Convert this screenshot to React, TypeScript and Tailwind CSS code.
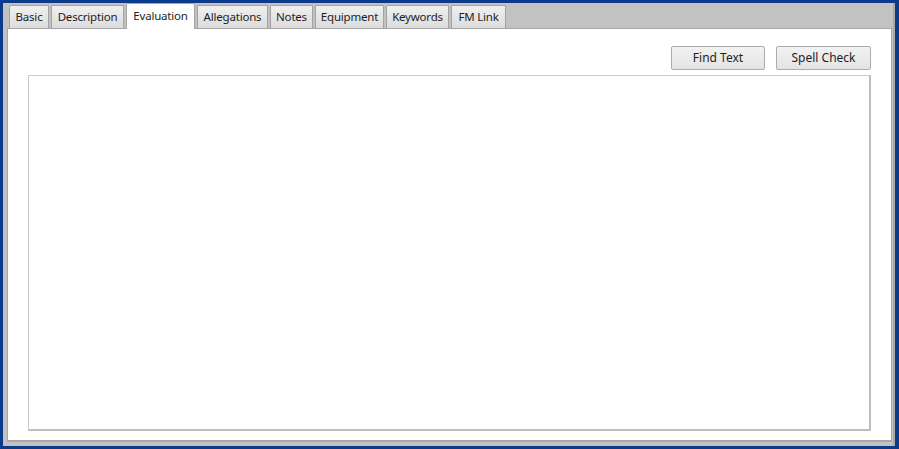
import React from 'react';

const tabs = [
    { label: 'Basic', w: 'w-[40px]' },
    { label: 'Description', w: 'w-[73px]' },
    { label: 'Evaluation', w: 'w-[69px]' },
    { label: 'Allegations', w: 'w-[71px]' },
    { label: 'Notes', w: 'w-[43px]' },
    { label: 'Equipment', w: 'w-[69px]' },
    { label: 'Keywords', w: 'w-[63px]' },
    { label: 'FM Link', w: 'w-[55px]' },
];
const active = 'Evaluation';

export default function App() {
    return (
        <div className="w-[899px] h-[449px] bg-[#0c3b8c] pt-[3px] pb-[3px] pl-[3px] pr-[4px] font-['Noto_Sans',sans-serif] text-[12px] text-[#1e1e1e]">
            <div className="h-full bg-[#c2c2c2] border-r-2 border-[#a9a9a9] flex flex-col pl-[4px] pr-[1px] pb-[4px]">
                <div className="flex items-end h-[25px] pl-[2px] gap-[2px]">
                    {tabs.map((t) => {
                        const on = t.label === active;
                        return (
                            <div
                                key={t.label}
                                className={
                                    (on
                                        ? 'relative z-10 h-[26px] -mb-px pt-[3px] bg-white leading-[18px] '
                                        : 'h-[23px] pt-[1px] bg-gradient-to-b from-[#f0f0f0] to-[#dcdcdc] leading-[19px] ') +
                                    t.w +
                                    ' text-center text-[11.5px] tracking-[-0.2px] whitespace-nowrap border border-b-0 border-[#a3a3a3] rounded-t-[2px]'
                                }
                            >
                                {t.label}
                            </div>
                        );
                    })}
                </div>
                <div className="flex-1 bg-white border border-[#a6a6a6] border-b-2 border-b-[#a8a8a8] flex flex-col pl-[20px] pr-[20px] pt-[17px] pb-[9px]">
                    <div className="flex justify-end gap-[11px] h-[24px]">
                        <button className="w-[94px] h-[24px] border border-[#acacac] rounded-[2px] bg-gradient-to-b from-[#f2f2f2] to-[#e3e3e3] text-[12px]">
                            Find Text
                        </button>
                        <button className="w-[95px] h-[24px] border border-[#acacac] rounded-[2px] bg-gradient-to-b from-[#f2f2f2] to-[#e3e3e3] text-[12px]">
                            Spell Check
                        </button>
                    </div>
                    <div className="flex-1 mt-[5px] border border-[#c6cbd3] border-r-2 border-b-2 border-r-[#b9bec6] border-b-[#b9bec6] rounded-[1px]" />
                </div>
            </div>
        </div>
    );
}
